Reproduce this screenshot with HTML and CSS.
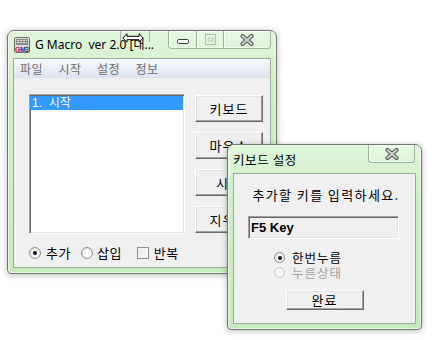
FILE: index.html
```html
<!DOCTYPE html>
<html>
<head>
<meta charset="utf-8">
<link rel="stylesheet" href="styles.css">
</head>
<body>
<div class="desk">
  <div class="win main">
    <div class="titlebar">
      <svg class="appicon" width="16" height="16" viewBox="0 0 16 16">
        <rect x="0.5" y="0.5" width="15" height="15" rx="1" fill="#d8d8d8" stroke="#6e6e6e"/>
        <rect x="2" y="2" width="12" height="6" fill="#8a8a8a"/>
        <g fill="#e8e8e8">
          <rect x="3" y="3" width="2" height="1"/><rect x="6" y="3" width="2" height="1"/><rect x="9" y="3" width="2" height="1"/><rect x="12" y="3" width="1" height="1"/>
          <rect x="3" y="5" width="2" height="1"/><rect x="6" y="5" width="2" height="1"/><rect x="9" y="5" width="2" height="1"/><rect x="12" y="5" width="1" height="1"/>
        </g>
        <text x="1" y="15" font-family="Liberation Sans, sans-serif" font-weight="bold" font-size="7" fill="#e01010">G</text>
        <text x="6" y="15" font-family="Liberation Sans, sans-serif" font-weight="bold" font-size="7" fill="#1030d0">M</text>
        <circle cx="13" cy="12.5" r="2.3" fill="#fff" stroke="#444"/>
        <path d="M13 11v3M11.6 12.5h2.8" stroke="#444" stroke-width="0.8"/>
      </svg>
      <span class="title">G Macro&nbsp; ver 2.0 [대...</span>
      <div class="caps">
        <span class="cap min"><svg width="12" height="5" viewBox="0 0 12 5"><rect x="0.5" y="0.5" width="11" height="4" rx="1.2" fill="#fff" stroke="#3a3a3a"/></svg></span>
        <span class="cap max"><svg width="11" height="11" viewBox="0 0 11 11"><rect x="0.5" y="0.5" width="10" height="10" fill="none" stroke="#a9c2a9"/><rect x="3" y="4" width="5" height="3" fill="none" stroke="#b7ccb7"/></svg></span>
        <span class="cap close"><svg width="14" height="12" viewBox="0 0 14 12"><path d="M2.5 2l9 8M11.5 2l-9 8" stroke="#4e4e4e" stroke-width="4" stroke-linecap="round"/><path d="M2.5 2l9 8M11.5 2l-9 8" stroke="#d4d4d4" stroke-width="2" stroke-linecap="round"/></svg></span>
      </div>
    </div>
    <div class="inner">
      <div class="menubar">
        <span class="mi">파일</span><span class="mi">시작</span><span class="mi">설정</span><span class="mi">정보</span>
      </div>
      <div class="client">
        <div class="toprow">
          <div class="listbox">
            <div class="item sel">1.&nbsp; 시작</div>
          </div>
          <div class="btns">
            <button class="btn">키보드</button>
            <button class="btn">마우스</button>
            <button class="btn">시간</button>
            <button class="btn">지우기</button>
          </div>
        </div>
        <div class="opts">
          <span class="radio on"></span><span class="lbl l1">추가</span>
          <span class="radio"></span><span class="lbl l2">삽입</span>
          <span class="check"></span><span class="lbl l3">반복</span>
        </div>
      </div>
    </div>
  </div>

  <div class="ghost"></div>
  <svg class="cursor" width="22" height="10" viewBox="0 0 22 10">
    <path d="M0.7 5L5 0.8V3.3H17V0.8L21.3 5L17 9.2V6.7H5V9.2Z" fill="#fff" stroke="#000" stroke-width="1" stroke-linejoin="miter"/>
  </svg>

  <div class="win dlg">
    <div class="titlebar dtitle">
      <span class="title dtext">키보드 설정</span>
      <div class="caps">
        <span class="cap close dclose"><svg width="14" height="12" viewBox="0 0 14 12"><path d="M2.5 2l9 8M11.5 2l-9 8" stroke="#4e4e4e" stroke-width="4" stroke-linecap="round"/><path d="M2.5 2l9 8M11.5 2l-9 8" stroke="#d4d4d4" stroke-width="2" stroke-linecap="round"/></svg></span>
      </div>
    </div>
    <div class="inner dbody">
      <div class="msg">추가할 키를 입력하세요.</div>
      <div class="textbox">F5 Key</div>
      <div class="dradios">
        <div class="row"><span class="radio on"></span><span class="lbl">한번누름</span></div>
        <div class="row dis"><span class="radio off"></span><span class="lbl">누른상태</span></div>
      </div>
      <button class="btn ok">완료</button>
    </div>
  </div>
</div>
</body>
</html>
```

FILE: styles.css
```css
* { box-sizing: border-box; }

body {
  margin: 0;
  background: #fff;
  font-family: "Noto Sans CJK KR", "Noto Sans", sans-serif;
}

.desk {
  position: relative;
  width: 433px;
  height: 340px;
  overflow: hidden;
  background: #fff;
}

.win {
  position: absolute;
  display: flex;
  flex-direction: column;
  border: 1px solid #6f776f;
  background: linear-gradient(180deg, #e1f7db 0%, #d0efc7 25%, #c6ebbd 100%);
  box-shadow: 0 1px 6px rgba(0, 0, 0, 0.28), inset 0 0 0 1px rgba(255, 255, 255, 0.55);
}

.main {
  left: 7px;
  top: 30px;
  width: 270px;
  height: 244px;
  border-radius: 7px 7px 4px 4px;
  padding: 0 5px 5px;
}

.titlebar {
  height: 27px;
  display: flex;
  align-items: center;
  flex: none;
}

.appicon {
  margin-left: 1px;
  margin-top: 1px;
  flex: none;
}

.title {
  flex: 1;
  margin-left: 5px;
  font-family: "Noto Sans", "Noto Sans CJK KR", sans-serif;
  font-size: 12px;
  line-height: 16px;
  color: #000;
  white-space: pre;
  overflow: hidden;
}

.caps {
  align-self: flex-start;
  display: flex;
  flex: none;
}

.cap {
  height: 18px;
  display: flex;
  align-items: center;
  justify-content: center;
  border: 1px solid rgba(100, 125, 100, 0.55);
  border-top: none;
  background: linear-gradient(180deg, rgba(255, 255, 255, 0.25), rgba(255, 255, 255, 0.05));
  box-shadow: inset 1px 0 rgba(255, 255, 255, 0.6), inset 0 -1px rgba(255, 255, 255, 0.6);
}

.min {
  width: 28px;
  border-right: none;
  border-bottom-left-radius: 4px;
  padding-top: 3px;
}

.max {
  width: 27px;
  border-right: none;
}

.close {
  width: 48px;
  border-bottom-right-radius: 4px;
}

.inner {
  flex: 1;
  display: flex;
  flex-direction: column;
  border: 1px solid #98ae98;
  background: #f0f0f0;
}

.menubar {
  height: 19px;
  display: flex;
  flex: none;
  padding-left: 6px;
  background: linear-gradient(180deg, #f7f8fc 0%, #eceff7 45%, #dce2ee 100%);
}

.mi {
  width: 38.5px;
  font-size: 12px;
  line-height: 19px;
  color: #6d6d6d;
  letter-spacing: 0.5px;
}

.client {
  flex: 1;
  padding: 16px 0 0 15px;
  background: #f0f0f0;
}

.toprow {
  display: flex;
  gap: 10px;
}

.listbox {
  width: 156px;
  height: 140px;
  border: 1px solid;
  border-color: #a0a0a0 #fff #fff #a0a0a0;
  box-shadow: inset 1px 1px #696969, inset -1px -1px #e3e3e3;
  background: #fff;
  padding: 1px 1px 1px 0;
}

.item {
  height: 14px;
  padding-left: 2px;
  font-family: "Liberation Sans", "Noto Sans CJK KR", sans-serif;
  font-size: 12px;
  line-height: 14px;
  white-space: pre;
}

.item.sel {
  background: #3399ff;
  color: #fff;
}

.btns {
  display: flex;
  flex-direction: column;
  gap: 10px;
  padding-top: 1px;
}

.btn {
  width: 68px;
  height: 27px;
  padding: 0;
  margin: 0;
  border: 1px solid;
  border-color: #fff #696969 #696969 #fff;
  box-shadow: inset -1px -1px #a0a0a0, inset 1px 1px #e3e3e3;
  background: #f0f0f0;
  color: #000;
  font-family: "Noto Sans CJK KR", sans-serif;
  font-size: 13px;
  line-height: 16px;
  letter-spacing: 1px;
}

.opts {
  display: flex;
  align-items: center;
  height: 14px;
  margin-top: 12px;
}

.radio {
  width: 12px;
  height: 12px;
  flex: none;
  border-radius: 50%;
  border: 1px solid #8d8d8d;
  background: radial-gradient(circle at 60% 60%, #ffffff 0%, #f3f3f3 45%, #d6d6d6 100%);
  position: relative;
}

.radio.on::after {
  content: "";
  position: absolute;
  left: 3px;
  top: 3px;
  width: 4px;
  height: 4px;
  border-radius: 50%;
  background: #111;
}

.radio.off {
  border-color: #c4c4c4;
  background: #f4f4f4;
}

.check {
  width: 12px;
  height: 12px;
  flex: none;
  border: 1px solid #8d8d8d;
  background: linear-gradient(135deg, #e4e4e4, #ffffff);
  box-shadow: inset 0 0 0 1px #f6f6f6;
}

.lbl {
  font-size: 13px;
  line-height: 14px;
  color: #000;
  letter-spacing: 0.5px;
}

.l1 { margin: 0 10px 0 5px; }
.l2 { margin: 0 15px 0 4px; }
.l3 { margin-left: 5px; }

.ghost {
  position: absolute;
  left: 120px;
  top: 30px;
  width: 30px;
  height: 12px;
  border-left: 1px solid rgba(110, 135, 110, 0.55);
  border-right: 1px solid rgba(110, 135, 110, 0.55);
}

.cursor {
  position: absolute;
  left: 122px;
  top: 33px;
}

/* dialog */
.dlg {
  left: 227px;
  top: 144px;
  width: 195px;
  height: 186px;
  border-radius: 7px 7px 4px 4px;
  padding: 0 5px 5px;
}

.dtitle {
  height: 28px;
}

.dtext {
  margin-left: 0;
  font-family: "Noto Sans CJK KR", sans-serif;
  font-size: 12.5px;
  letter-spacing: 0.6px;
  padding-top: 1px;
}

.dclose {
  height: 18px;
  width: 47px;
  margin-right: 1px;
  border-bottom-left-radius: 4px;
}

.msg {
  margin-top: 13px;
  text-align: center;
  font-size: 13px;
  line-height: 16px;
  color: #000;
  letter-spacing: 1.4px;
  padding-left: 3px;
}

.textbox {
  margin: 13px 0 0 14px;
  width: 151px;
  height: 23px;
  border: 1px solid;
  border-color: #a0a0a0 #fff #fff #a0a0a0;
  box-shadow: inset 1px 1px #696969, inset -1px -1px #e3e3e3;
  background: #f0f0f0;
  padding-left: 2px;
  font-family: "Liberation Sans", sans-serif;
  font-weight: bold;
  font-size: 13px;
  line-height: 21px;
  color: #000;
}

.dradios {
  margin: 11px 0 0 40px;
  display: flex;
  flex-direction: column;
}

.row {
  height: 15px;
  display: flex;
  align-items: center;
}

.row .radio {
  width: 11px;
  height: 11px;
}

.row .radio.on::after {
  left: 2.5px;
  top: 2.5px;
}

.row .lbl {
  margin-left: 7px;
  font-size: 12.5px;
  line-height: 15px;
  letter-spacing: 1px;
}

.row.dis .lbl {
  color: #a0a0a0;
}

.btn.ok {
  align-self: center;
  margin-top: 10px;
  width: 78px;
  height: 20px;
  line-height: 16px;
}
```
